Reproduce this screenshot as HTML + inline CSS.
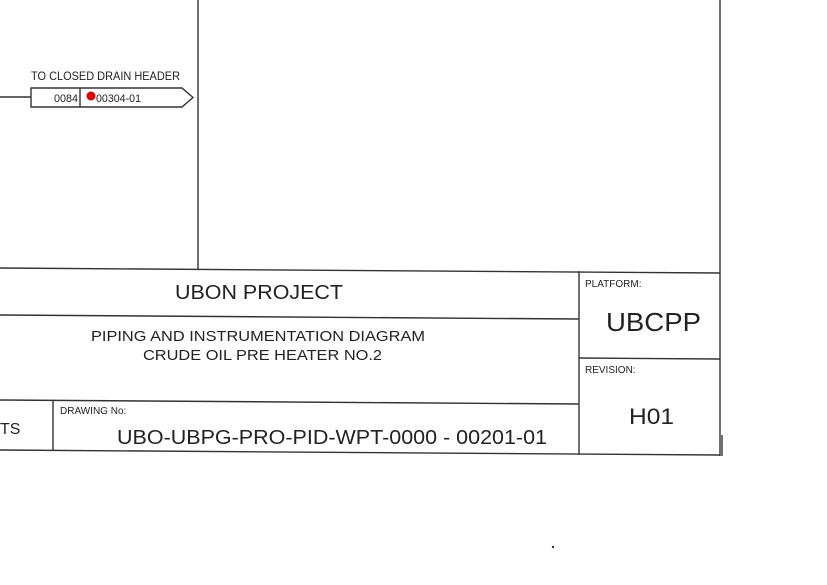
<!DOCTYPE html>
<html><head><meta charset="utf-8"><style>
html,body{margin:0;padding:0;background:#fff;width:827px;height:585px;overflow:hidden}
svg{display:block}
text{font-family:"Liberation Sans",Arial,sans-serif;fill:#222}
</style></head><body>
<svg width="827" height="585" viewBox="0 0 827 585" xmlns="http://www.w3.org/2000/svg">
<g stroke="#333" stroke-width="1.4" fill="none">
<line x1="198" y1="0" x2="198" y2="269"/>
<line x1="720" y1="0" x2="720" y2="456"/>
<line x1="0" y1="268" x2="720" y2="273"/>
<line x1="0" y1="315" x2="579" y2="319"/>
<line x1="579" y1="271" x2="579" y2="455"/>
<line x1="579" y1="358" x2="720" y2="359"/>
<line x1="0" y1="400" x2="579" y2="404"/>
<line x1="53" y1="401" x2="53" y2="451"/>
<line x1="0" y1="450" x2="720" y2="455"/>
<line x1="722" y1="435" x2="722" y2="456"/>
<line x1="0" y1="97" x2="31" y2="97"/>
<path d="M31 88 H182 L193 97.5 L182 107 H31 Z"/>
<line x1="80" y1="88" x2="80" y2="107"/>
</g>
<circle cx="91" cy="96" r="4.5" fill="#e00000"/>
<text x="31" y="80" font-size="12" textLength="149" lengthAdjust="spacingAndGlyphs">TO CLOSED DRAIN HEADER</text>
<text x="54" y="102" font-size="11" textLength="24" lengthAdjust="spacingAndGlyphs">0084</text>
<text x="96" y="102" font-size="11" textLength="45" lengthAdjust="spacingAndGlyphs">00304-01</text>
<text x="175" y="299" font-size="20" textLength="168" lengthAdjust="spacingAndGlyphs">UBON PROJECT</text>
<text x="91" y="341" font-size="15" textLength="334" lengthAdjust="spacingAndGlyphs">PIPING AND INSTRUMENTATION DIAGRAM</text>
<text x="143" y="360" font-size="15" textLength="239" lengthAdjust="spacingAndGlyphs">CRUDE OIL PRE HEATER NO.2</text>
<text x="0" y="434" font-size="16">TS</text>
<text x="60" y="414" font-size="10">DRAWING No:</text>
<text x="117" y="444" font-size="20" textLength="430" lengthAdjust="spacingAndGlyphs">UBO-UBPG-PRO-PID-WPT-0000 - 00201-01</text>
<text x="585" y="287" font-size="10">PLATFORM:</text>
<text x="606" y="331" font-size="26" textLength="95" lengthAdjust="spacingAndGlyphs">UBCPP</text>
<text x="585" y="373" font-size="10">REVISION:</text>
<text x="629" y="424" font-size="22" textLength="45" lengthAdjust="spacingAndGlyphs">H01</text>
<circle cx="553" cy="547" r="1.2" fill="#333"/>
</svg>
</body></html>
